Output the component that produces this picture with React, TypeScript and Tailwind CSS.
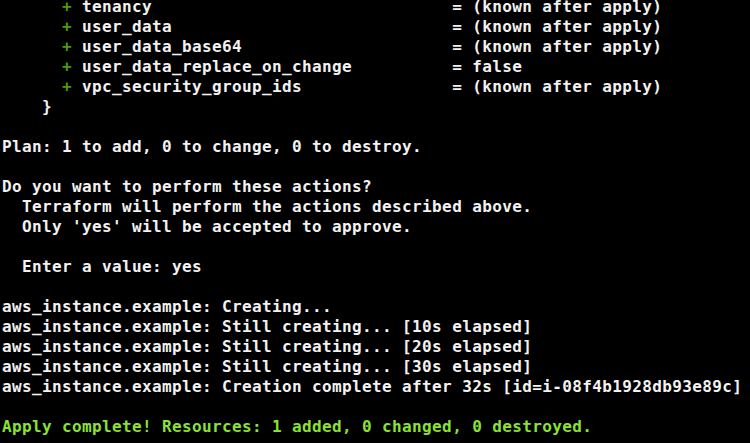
const attrs: [string, string][] = [
  ["tenancy", "(known after apply)"],
  ["user_data", "(known after apply)"],
  ["user_data_base64", "(known after apply)"],
  ["user_data_replace_on_change", "false"],
  ["vpc_security_group_ids", "(known after apply)"],
];

const creating = [
  "Creating...",
  "Still creating... [10s elapsed]",
  "Still creating... [20s elapsed]",
  "Still creating... [30s elapsed]",
  "Creation complete after 32s [id=i-08f4b1928db93e89c]",
];

function Line({ children }: { children?: React.ReactNode }) {
  return <div className="h-5 whitespace-pre">{children ?? " "}</div>;
}

export default function App() {
  return (
    <div className="w-[750px] h-[443px] overflow-hidden bg-black">
      <div
        className="-mt-[3px] pl-[2px] text-[16px] leading-5 font-bold tracking-[0.37px] text-[#f2f2f2]"
        style={{ fontFamily: '"DejaVu Sans Mono", "Liberation Mono", monospace' }}
      >
        {attrs.map(([name, value]) => (
          <Line key={name}>
            {"      "}
            <span className="text-[#4e9a06]">+</span>
            {" " + name.padEnd(37, " ") + "= " + value}
          </Line>
        ))}
        <Line>{"    }"}</Line>
        <Line />
        <Line>Plan: 1 to add, 0 to change, 0 to destroy.</Line>
        <Line />
        <Line>Do you want to perform these actions?</Line>
        <Line>{"  Terraform will perform the actions described above."}</Line>
        <Line>{"  Only 'yes' will be accepted to approve."}</Line>
        <Line />
        <Line>{"  Enter a value: yes"}</Line>
        <Line />
        {creating.map((msg) => (
          <Line key={msg}>aws_instance.example: {msg}</Line>
        ))}
        <Line />
        <Line>
          <span className="text-[#8ae234]">
            Apply complete! Resources: 1 added, 0 changed, 0 destroyed.
          </span>
        </Line>
      </div>
    </div>
  );
}
